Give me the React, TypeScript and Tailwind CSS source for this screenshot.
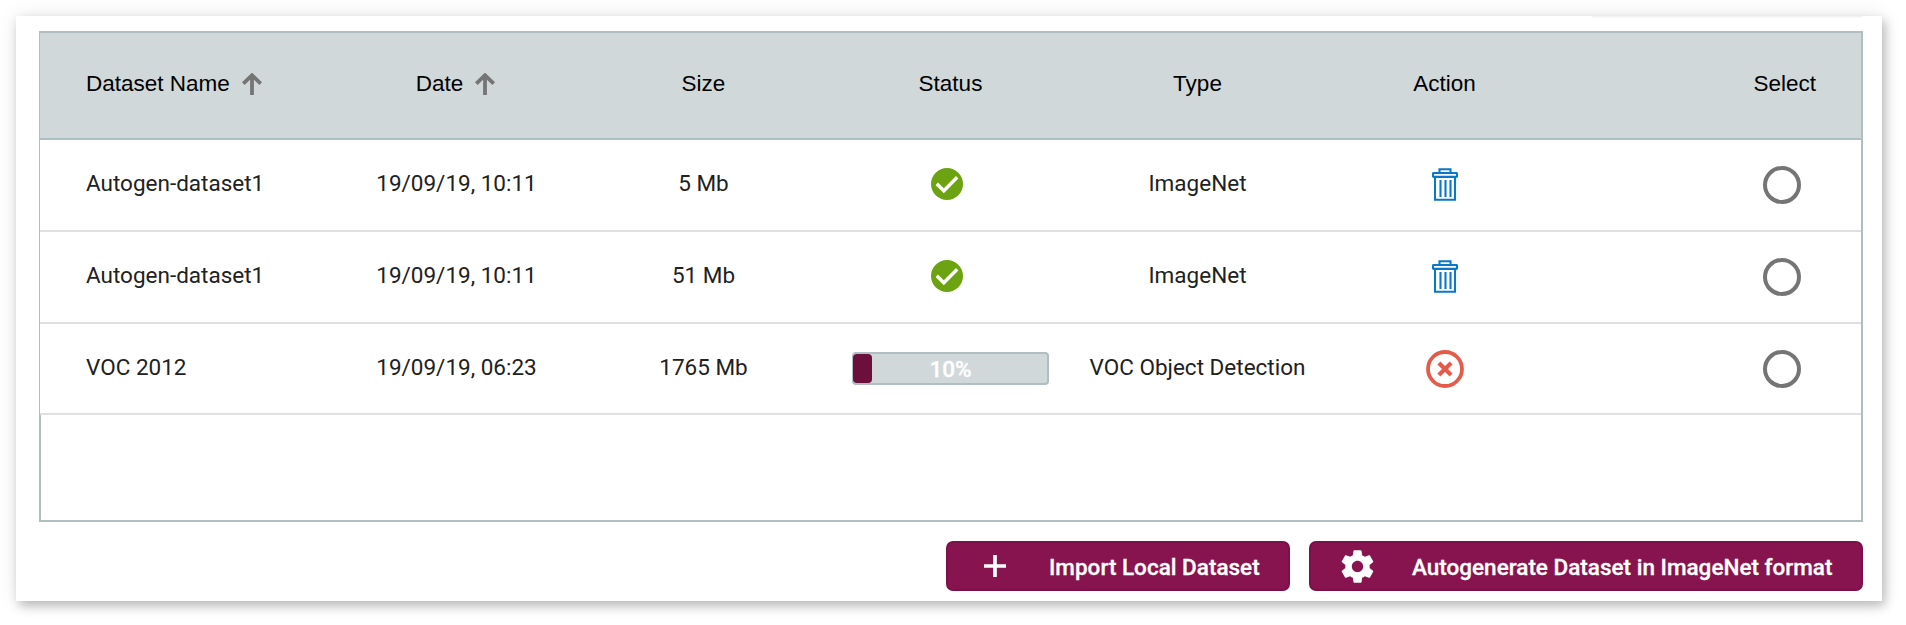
import React from "react";

type Row = { name: string; date: string; size: string; type: string; progress?: number };

const rows: Row[] = [
  { name: "Autogen-dataset1", date: "19/09/19, 10:11", size: "5 Mb", type: "ImageNet" },
  { name: "Autogen-dataset1", date: "19/09/19, 10:11", size: "51 Mb", type: "ImageNet" },
  { name: "VOC 2012", date: "19/09/19, 06:23", size: "1765 Mb", type: "VOC Object Detection", progress: 10 },
];

const cols = "grid grid-cols-[293px_247px_247px_247px_247px_247px_1fr] items-center";

const SortArrow = () => (
  <svg width="20" height="22" viewBox="0 0 20 22" fill="none" stroke="#757575" strokeWidth="3.8">
    <path d="M10 22V2.5M1.3 10.7 10 2.2l8.7 8.5" />
  </svg>
);

const Check = () => (
  <svg className="mb-[2px] mr-[7px]" width="32" height="32" viewBox="0 0 32 32">
    <circle cx="16" cy="16" r="16" fill="#6ca310" />
    <path d="M5.8 15.8l7 7L26.2 9.3" fill="none" stroke="#fff" strokeWidth="3.4" />
  </svg>
);

const Trash = () => (
  <svg width="26" height="34" viewBox="0 0 26 34" fill="none" stroke="#0a78c8" strokeWidth="2.1">
    <path d="M7.5 5V1.2h11V5" />
    <rect x="1" y="5" width="24" height="3.9" rx=".6" />
    <path d="M3 9v22.8h20V9M8.5 12v17M13.5 12v17M18.5 12v17" />
  </svg>
);

const Cancel = () => (
  <svg width="38" height="38" viewBox="0 0 38 38" fill="none" stroke="#e55b4a">
    <circle cx="19" cy="19" r="17" strokeWidth="3.8" />
    <path d="M12.9 12.9l12.2 12.2M25.1 12.9L12.9 25.1" strokeWidth="4.2" />
  </svg>
);

const Gear = () => (
  <svg width="39" height="39" viewBox="0 0 24 24" fill="#fff">
    <path d="M19.43 12.98c.04-.32.07-.64.07-.98s-.03-.66-.07-.98l2.11-1.65c.19-.15.24-.42.12-.64l-2-3.46c-.12-.22-.39-.3-.61-.22l-2.49 1c-.52-.4-1.08-.73-1.69-.98l-.38-2.65C14.46 2.18 14.25 2 14 2h-4c-.25 0-.46.18-.49.42l-.38 2.65c-.61.25-1.17.59-1.69.98l-2.49-1c-.23-.09-.49 0-.61.22l-2 3.46c-.13.22-.07.49.12.64l2.11 1.65c-.04.32-.07.65-.07.98s.03.66.07.98l-2.11 1.65c-.19.15-.24.42-.12.64l2 3.46c.12.22.39.3.61.22l2.49-1c.52.4 1.08.73 1.69.98l.38 2.65c.03.24.24.42.49.42h4c.25 0 .46-.18.49-.42l.38-2.65c.61-.25 1.17-.59 1.69-.98l2.49 1c.23.09.49 0 .61-.22l2-3.46c.12-.22.07-.49-.12-.64l-2.11-1.65zM12 15.5c-1.93 0-3.5-1.57-3.5-3.5s1.57-3.5 3.5-3.5 3.5 1.57 3.5 3.5-1.57 3.5-3.5 3.5z" />
  </svg>
);

const Progress = ({ value }: { value: number }) => (
  <div className="relative flex h-[33px] w-[197px] items-center justify-center rounded-[4px] border-2 border-[#b0bec1] bg-[#d0d8da]">
    <div className="absolute -left-px top-0 h-full rounded-[4px] bg-[#6b0f3c]" style={{ width: `${value}%` }} />
    <span className="relative pt-[3px] text-[22.5px] font-medium text-white [-webkit-text-stroke:0.3px_white]">{value}%</span>
  </div>
);

export default function App() {
  return (
    <div className="h-[625px] w-full overflow-hidden bg-white p-4 font-['Roboto',sans-serif] text-[22.5px] text-[#212121]">
      <main className="relative h-[585px] w-[1866px] bg-white pl-[23px] pt-[15px] shadow-[3px_5px_10px_rgba(0,0,0,0.24),0_0_20px_rgba(0,0,0,0.09)]">
        <div className="absolute left-[1576px] top-0 h-[2px] w-[270px] bg-gradient-to-b from-[#ededed] to-white" />
        <section className="h-[491px] w-[1824px] border-2 border-[#b0bec1]">
          <div className={`${cols} -ml-px h-[107px] border-b-2 border-[#b0bec1] bg-[#d0d8da] pb-[3px] font-['Liberation_Sans',Arial,sans-serif] text-black`}>
            <div className="flex items-center gap-[12px] pl-[46px]">Dataset Name <SortArrow /></div>
            <div className="flex items-center justify-center gap-[12px] pr-[2px]">Date <SortArrow /></div>
            <div className="text-center">Size</div>
            <div className="text-center">Status</div>
            <div className="text-center">Type</div>
            <div className="text-center">Action</div>
            <div className="pr-[45px] text-right">Select</div>
          </div>
          {rows.map((r, i) => (
            <div key={i} className={`${cols} -ml-px h-[92px] border-b-2 border-[#e0e0e0] bg-white last:h-[91px]`}>
              <div className="pb-[2px] pl-[46px]">{r.name}</div>
              <div className="pb-[2px] text-center">{r.date}</div>
              <div className="pb-[2px] text-center">{r.size}</div>
              <div className="flex justify-center">{r.progress ? <Progress value={r.progress} /> : <Check />}</div>
              <div className="pb-[2px] text-center">{r.type}</div>
              <div className="flex justify-center">{r.progress ? <Cancel /> : <Trash />}</div>
              <div className="flex justify-end pr-[60px]">
                <button aria-label="Select dataset" className="h-[38px] w-[38px] rounded-full border-4 border-[#757575]" />
              </div>
            </div>
          ))}
        </section>
        <div className="mt-[19px] flex w-[1824px] justify-end gap-[19px] font-medium text-white [-webkit-text-stroke:0.3px_white]">
          <button className="flex h-[50px] w-[344px] items-center rounded-[7px] border-2 border-[#7a1148] bg-[#88144f] pl-[36px]">
            <svg width="22" height="22" viewBox="0 0 22 22" stroke="#fff" strokeWidth="3.7"><path d="M11 0v22M0 11h22" /></svg>
            <span className="ml-[43px] whitespace-nowrap pt-[3px]">Import Local Dataset</span>
          </button>
          <button className="flex h-[50px] w-[554px] items-center rounded-[7px] border-2 border-[#7a1148] bg-[#88144f] pl-[27px]">
            <Gear />
            <span className="ml-[35px] whitespace-nowrap pt-[3px]">Autogenerate Dataset in ImageNet format</span>
          </button>
        </div>
      </main>
    </div>
  );
}
